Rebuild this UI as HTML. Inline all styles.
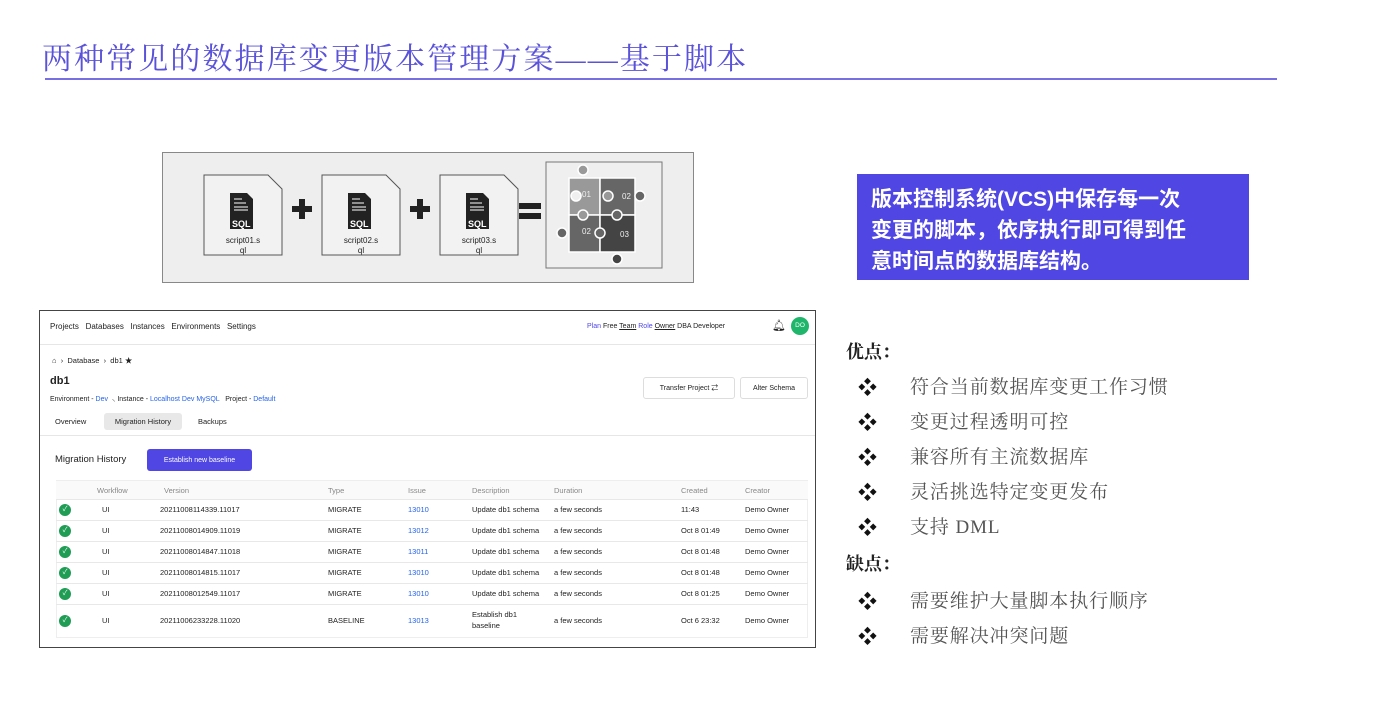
<!DOCTYPE html>
<html><head><meta charset="utf-8"><style>
*{margin:0;padding:0;box-sizing:border-box}
body{width:1376px;height:706px;background:#fff;position:relative;overflow:hidden;font-family:"Liberation Sans","Noto Sans CJK SC",sans-serif}
.a{position:absolute;white-space:nowrap}
.title{left:42px;top:34px;font-family:"Liberation Serif","Noto Serif CJK SC",serif;font-size:30px;color:#5a52d8;letter-spacing:2.1px}
.hl{left:45px;top:78px;width:1232px;height:1.5px;background:#7770e2}
.diag{left:162px;top:152px;width:532px;height:131px;background:#eeeeee;border:1px solid #888}
.doc{top:175px;width:78px;height:80px}
.doc .t{position:absolute;left:0;width:78px;text-align:center;font-size:8px;color:#222;line-height:10px;top:61px}
.vcs{left:857px;top:174px;width:392px;height:106px;background:#5046e4;color:#fff;font-weight:bold;font-size:21px;line-height:31px;padding:10px 0 0 14px}
.ui{left:39px;top:310px;width:777px;height:338px;border:1px solid #444;background:#fff;font-size:8px;color:#222}
.r{position:absolute;left:846px;font-family:"Liberation Serif","Noto Serif CJK SC",serif}
.hd{font-size:18px;font-weight:bold;color:#222}
.it{font-size:19px;color:#555;left:910px;letter-spacing:0.9px}
.bl{font-size:19px;color:#111;left:858px}
.row{position:absolute;left:16px;width:752px;border-top:1px solid #e8e8e8;height:21px}
.row span{position:absolute;top:5px;font-size:7.5px}
.ck{width:12px;height:12px;border-radius:50%;background:#1f9d55;top:4px!important;left:3px;color:#fff;font-size:7px!important;text-align:center;line-height:12px}
.btn{display:flex;align-items:center;justify-content:center}
</style></head><body>
<div class="a title">两种常见的数据库变更版本管理方案——基于脚本</div>
<div class="a hl"></div>

<div class="a diag"></div>
<svg class="a" style="left:162px;top:152px" width="532" height="131" viewBox="162 152 532 131">
<g fill="#f2f2f2" stroke="#555" stroke-width="1">
<path d="M204 175H268L282 189V255H204Z"/><path d="M322 175H386L400 189V255H322Z"/><path d="M440 175H504L518 189V255H440Z"/>
</g>
<g fill="#222">
<path d="M230 193h17l6 6v30h-23z"/><path d="M348 193h17l6 6v30h-23z"/><path d="M466 193h17l6 6v30h-23z"/>
<rect x="292" y="206" width="20" height="6"/><rect x="299" y="199" width="6" height="20"/>
<rect x="410" y="206" width="20" height="6"/><rect x="417" y="199" width="6" height="20"/>
<rect x="519" y="203" width="22" height="6"/><rect x="519" y="213" width="22" height="6"/>
</g>
<g fill="#fff" font-size="9" font-weight="bold" font-family="Liberation Sans"><text x="232" y="227">SQL</text><text x="350" y="227">SQL</text><text x="468" y="227">SQL</text></g>
<g stroke="#fff" stroke-width="1"><path d="M234 199h8M234 203h12M234 207h14M234 210h14M352 199h8M352 203h12M352 207h14M352 210h14M470 199h8M470 203h12M470 207h14M470 210h14"/></g>
<rect x="546" y="162" width="116" height="106" fill="#efefef" stroke="#777"/>
<g stroke="#fff" stroke-width="1.5">
<path d="M569 178h31v37h-31z" fill="#999"/><circle cx="576" cy="196" r="5" fill="#efefef"/><circle cx="583" cy="170" r="5" fill="#999"/>
<path d="M600 178h35v37h-35z" fill="#666"/><circle cx="640" cy="196" r="5" fill="#666"/><circle cx="608" cy="196" r="5" fill="#999"/>
<path d="M569 215h31v37h-31z" fill="#666"/><circle cx="562" cy="233" r="5" fill="#666"/><circle cx="583" cy="215" r="5" fill="#999"/>
<path d="M600 215h35v37h-35z" fill="#444"/><circle cx="617" cy="259" r="5" fill="#444"/><circle cx="617" cy="215" r="5" fill="#666"/><circle cx="600" cy="233" r="5" fill="#666"/>
</g>
<g fill="#eee" font-size="8" font-family="Liberation Sans"><text x="582" y="197">01</text><text x="622" y="199">02</text><text x="582" y="234">02</text><text x="620" y="237">03</text></g>
</svg>
<div class="a doc" style="left:204px"><div class="t">script01.s<br>ql</div></div>
<div class="a doc" style="left:322px"><div class="t">script02.s<br>ql</div></div>
<div class="a doc" style="left:440px"><div class="t">script03.s<br>ql</div></div>

<div class="a vcs">版本控制系统(VCS)中保存每一次<br>变更的脚本，依序执行即可得到任<br>意时间点的数据库结构。</div>

<div class="a ui">
<div class="a" style="left:10px;top:11px">Projects&nbsp;&nbsp; Databases&nbsp;&nbsp; Instances&nbsp;&nbsp; Environments&nbsp;&nbsp; Settings</div>
<div class="a" style="left:547px;top:12px;font-size:7px"><span style="color:#5046e4">Plan</span> Free <u>Team</u> <span style="color:#5046e4">Role</span> <u>Owner</u> DBA Developer</div>
<div class="a" style="left:732px;top:8px;font-size:11px">🔔︎</div>
<div class="a" style="left:751px;top:6px;width:18px;height:18px;border-radius:50%;background:#1fb56a;color:#fff;font-size:6.5px;text-align:center;line-height:18px">DO</div>
<div class="a" style="left:0;top:33px;width:775px;height:1px;background:#e6e6e6"></div>
<div class="a" style="left:12px;top:44px;font-size:7.5px">⌂ &nbsp;›&nbsp; Database &nbsp;›&nbsp; db1 ★</div>
<div class="a" style="left:10px;top:64px;font-size:11px;font-weight:bold">db1</div>
<div class="a" style="left:10px;top:84px;font-size:7px">Environment - <span style="color:#2563eb">Dev</span> &nbsp;⸜ Instance - <span style="color:#2563eb">Localhost Dev MySQL</span> &nbsp; Project - <span style="color:#2563eb">Default</span></div>
<div class="a btn" style="left:603px;top:66px;width:92px;height:22px;border:1px solid #ddd;border-radius:3px;font-size:7px">Transfer Project ⇄</div>
<div class="a btn" style="left:700px;top:66px;width:68px;height:22px;border:1px solid #ddd;border-radius:3px;font-size:7px">Alter Schema</div>
<div class="a" style="left:15px;top:106px;font-size:7.5px">Overview</div>
<div class="a btn" style="left:64px;top:102px;width:78px;height:17px;background:#e8e8e8;border-radius:3px;font-size:7.5px">Migration History</div>
<div class="a" style="left:158px;top:106px;font-size:7.5px">Backups</div>
<div class="a" style="left:0;top:124px;width:775px;height:1px;background:#e6e6e6"></div>
<div class="a" style="left:15px;top:143px;font-size:9.5px">Migration History</div>
<div class="a btn" style="left:107px;top:138px;width:105px;height:22px;background:#5046e4;color:#fff;border-radius:3px;font-size:7px">Establish new baseline</div>
<div class="a" style="left:16px;top:169px;width:752px;height:158px;border:1px solid #eee"></div>
<div class="row" style="top:170px;background:#fafafa;border:none;height:18px;color:#888"><span style="left:41px;top:5px">Workflow</span><span style="left:108px;top:5px">Version</span><span style="left:272px;top:5px">Type</span><span style="left:352px;top:5px">Issue</span><span style="left:416px;top:5px">Description</span><span style="left:498px;top:5px">Duration</span><span style="left:625px;top:5px">Created</span><span style="left:689px;top:5px">Creator</span></div>
<div class="row" style="top:188px"><span class="ck">✓</span><span style="left:46px">UI</span><span style="left:104px">20211008114339.11017</span><span style="left:272px">MIGRATE</span><span style="left:352px;color:#2563eb">13010</span><span style="left:416px">Update db1 schema</span><span style="left:498px">a few seconds</span><span style="left:625px">11:43</span><span style="left:689px">Demo Owner</span></div>
<div class="row" style="top:209px"><span class="ck">✓</span><span style="left:46px">UI</span><span style="left:104px">20211008014909.11019</span><span style="left:272px">MIGRATE</span><span style="left:352px;color:#2563eb">13012</span><span style="left:416px">Update db1 schema</span><span style="left:498px">a few seconds</span><span style="left:625px">Oct 8 01:49</span><span style="left:689px">Demo Owner</span></div>
<div class="row" style="top:230px"><span class="ck">✓</span><span style="left:46px">UI</span><span style="left:104px">20211008014847.11018</span><span style="left:272px">MIGRATE</span><span style="left:352px;color:#2563eb">13011</span><span style="left:416px">Update db1 schema</span><span style="left:498px">a few seconds</span><span style="left:625px">Oct 8 01:48</span><span style="left:689px">Demo Owner</span></div>
<div class="row" style="top:251px"><span class="ck">✓</span><span style="left:46px">UI</span><span style="left:104px">20211008014815.11017</span><span style="left:272px">MIGRATE</span><span style="left:352px;color:#2563eb">13010</span><span style="left:416px">Update db1 schema</span><span style="left:498px">a few seconds</span><span style="left:625px">Oct 8 01:48</span><span style="left:689px">Demo Owner</span></div>
<div class="row" style="top:272px"><span class="ck">✓</span><span style="left:46px">UI</span><span style="left:104px">20211008012549.11017</span><span style="left:272px">MIGRATE</span><span style="left:352px;color:#2563eb">13010</span><span style="left:416px">Update db1 schema</span><span style="left:498px">a few seconds</span><span style="left:625px">Oct 8 01:25</span><span style="left:689px">Demo Owner</span></div>
<div class="row" style="top:293px;height:33px"><span class="ck" style="top:10px!important">✓</span><span style="left:46px;top:11px">UI</span><span style="left:104px;top:11px">20211006233228.11020</span><span style="left:272px;top:11px">BASELINE</span><span style="left:352px;top:11px;color:#2563eb">13013</span><span style="left:416px;top:4px;line-height:11px">Establish db1<br>baseline</span><span style="left:498px;top:11px">a few seconds</span><span style="left:625px;top:11px">Oct 6 23:32</span><span style="left:689px;top:11px">Demo Owner</span></div>
</div>

<div class="r hd" style="top:338px">优点：</div>
<div class="r bl" style="top:373px">❖</div><div class="r it" style="top:372px">符合当前数据库变更工作习惯</div>
<div class="r bl" style="top:408px">❖</div><div class="r it" style="top:407px">变更过程透明可控</div>
<div class="r bl" style="top:443px">❖</div><div class="r it" style="top:442px">兼容所有主流数据库</div>
<div class="r bl" style="top:478px">❖</div><div class="r it" style="top:477px">灵活挑选特定变更发布</div>
<div class="r bl" style="top:513px">❖</div><div class="r it" style="top:512px">支持 DML</div>
<div class="r hd" style="top:550px">缺点：</div>
<div class="r bl" style="top:587px">❖</div><div class="r it" style="top:586px">需要维护大量脚本执行顺序</div>
<div class="r bl" style="top:622px">❖</div><div class="r it" style="top:621px">需要解决冲突问题</div>
</body></html>
